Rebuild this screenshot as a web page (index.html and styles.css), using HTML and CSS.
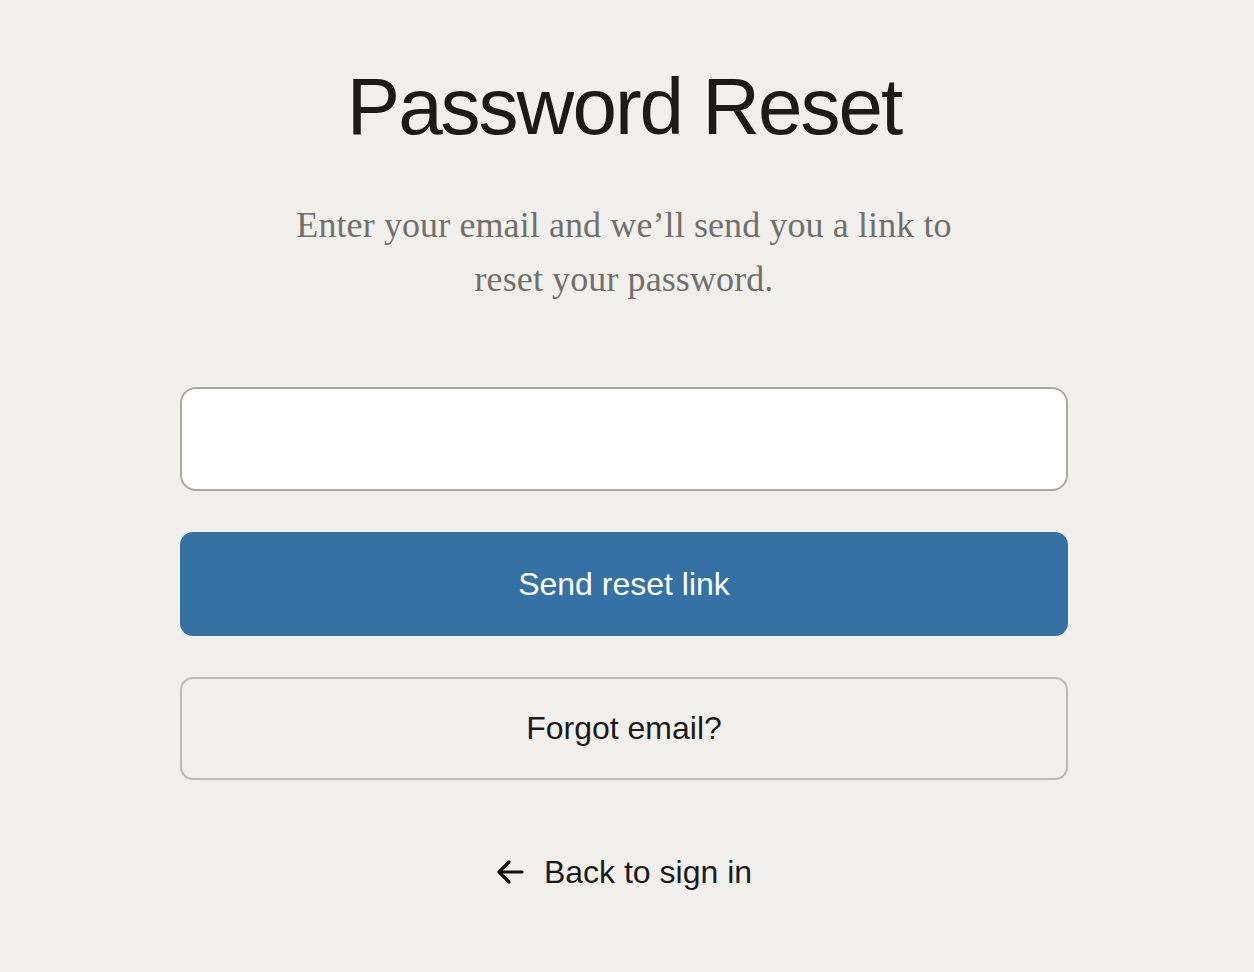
FILE: index.html
```html
<!DOCTYPE html>
<html lang="en">
<head>
<meta charset="utf-8">
<title>Password Reset</title>
<link rel="stylesheet" href="styles.css">
</head>
<body>
<main class="page">
  <div class="card">
    <h1 class="title">Password Reset</h1>
    <p class="subtitle">Enter your email and we’ll send you a link to<br>reset your password.</p>
    <form class="form">
      <input class="email" type="email" aria-label="Email">
      <button class="btn-primary" type="button">Send reset link</button>
      <button class="btn-secondary" type="button">Forgot email?</button>
    </form>
    <a class="back" href="#">
      <svg class="back-icon" width="28" height="24" viewBox="0 0 28 24" aria-hidden="true">
        <path d="M26 12H3 M13 2 L3 12 L13 22" fill="none" stroke="#111" stroke-width="3.2" stroke-linecap="round" stroke-linejoin="round"/>
      </svg>
      <span>Back to sign in</span>
    </a>
  </div>
</main>
</body>
</html>
```
FILE: styles.css
```css
html, body {
  margin: 0;
  padding: 0;
  background: #f2f0ed;
}
body {
  font-family: "Liberation Sans", Arial, sans-serif;
  color: #1c1b19;
}
.page {
  display: flex;
  justify-content: center;
  padding: 59px 6px 0 0;
}
.card {
  width: 888px;
  display: flex;
  flex-direction: column;
  align-items: center;
}
.title {
  margin: 0;
  font-size: 80px;
  line-height: 96px;
  font-weight: 400;
  letter-spacing: -2px;
  color: #1c1b19;
}
.subtitle {
  margin: 43px 0 0;
  font-family: "Liberation Serif", "Times New Roman", serif;
  font-size: 36px;
  line-height: 54px;
  letter-spacing: 0.1px;
  color: #72706b;
  text-align: center;
}
.form {
  margin-top: 81px;
  width: 100%;
  display: flex;
  flex-direction: column;
  gap: 41px;
}
.email {
  box-sizing: border-box;
  width: 100%;
  height: 104px;
  border: 2px solid #aca89f;
  border-radius: 16px;
  background: #ffffff;
  font: inherit;
  font-size: 32px;
  padding: 0 24px;
  outline: none;
}
.btn-primary,
.btn-secondary {
  box-sizing: border-box;
  width: 100%;
  height: 104px;
  border-radius: 13px;
  font-family: "Liberation Sans", Arial, sans-serif;
  font-size: 32px;
  cursor: pointer;
}
.btn-primary {
  border: none;
  background: #3671a5;
  color: #ffffff;
}
.btn-secondary {
  height: 103px;
  border: 2px solid #bdbab5;
  background: transparent;
  color: #1c1b19;
}
.back {
  margin-top: 72px;
  display: flex;
  align-items: center;
  gap: 20px;
  font-size: 32px;
  line-height: 40px;
  color: #1c1b19;
  text-decoration: none;
}
.back-icon {
  display: block;
}
```
